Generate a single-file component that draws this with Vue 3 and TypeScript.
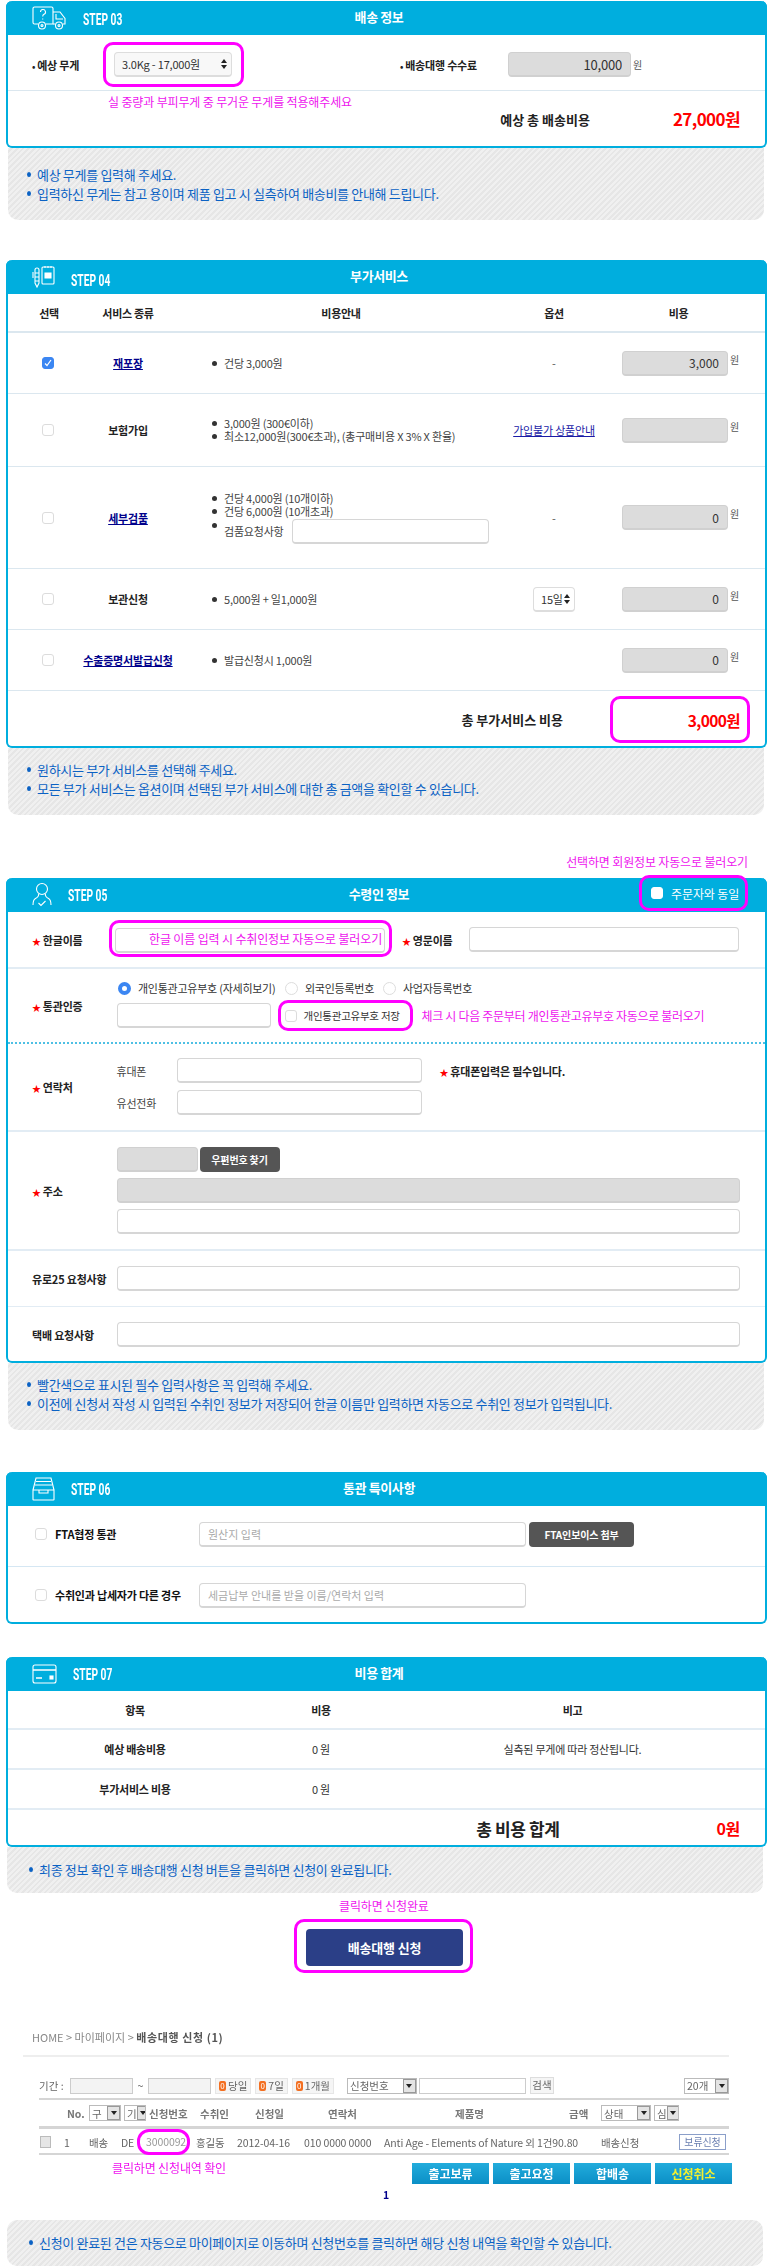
<template>
  <div class="page">
    <!-- STEP 03 -->
    <section class="card step3">
      <header class="head">
        <div class="head-left">
          <svg width="35" height="24" viewBox="0 0 35 24" class="ico">
            <path d="M6 18H2.500a1.500 1.500 0 0 1-1.500-1.500V2.500A1.500 1.500 0 0 1 2.500 1h17A1.500 1.500 0 0 1 21 2.500V18H14" />
            <path d="M21 6h7l5 6.500V18h-2M21 18h2M24 8v5h7" />
            <circle cx="10" cy="19.500" r="3.500" /><circle cx="10" cy="19.500" r="1" />
            <circle cx="27" cy="19.500" r="3.500" /><circle cx="27" cy="19.500" r="1" />
            <path d="M8.500 6a2.500 2.500 0 1 1 3.500 2.300c-1 .5-1.300 1-1.300 2.200M10.700 12.500v1" />
          </svg>
          <span class="step">STEP 03</span>
        </div>
        <h2>배송 정보</h2>
      </header>
      <div class="ship-row">
        <span class="label dot-label weight-label">예상 무게</span>
        <div class="ringed select-ring">
          <div class="select weight-select">3.0Kg - 17,000원<svg width="6" height="10" viewBox="0 0 6 10"><path d="M3 0l3 4H0zM3 10L0 6h6z" /></svg></div>
        </div>
        <span class="label dot-label fee-label">배송대행 수수료</span>
        <input class="field gray amount fee-input" value="10,000" readonly />
        <span class="won">원</span>
      </div>
      <div class="ship-total">
        <p class="hint weight-hint">실 중량과 부피무게 중 무거운 무게를 적용해주세요</p>
        <div class="total-line">
          <strong class="ship-total-label">예상 총 배송비용</strong>
          <strong class="price ship-price">27,000원</strong>
        </div>
      </div>
    </section>
    <div class="note note3">
      <p>예상 무게를 입력해 주세요.</p>
      <p>입력하신 무게는 참고 용이며 제품 입고 시 실측하여 배송비를 안내해 드립니다.</p>
    </div>

    <!-- STEP 04 -->
    <section class="card step4">
      <header class="head">
        <div class="head-left">
          <svg width="23" height="24" viewBox="0 0 23 24" class="ico">
            <path d="M3 5a2 2 0 0 1 4 0v13l-2 4-2-4zM3 8h4M3 12h4M3 16h4M1 7v6" />
            <rect x="10" y="2" width="12" height="17" rx="1" />
            <path d="M13 1v2M16 1v2M19 1v2" /><path d="M13 8h6v5h-6z" fill="#fff" />
          </svg>
          <span class="step">STEP 04</span>
        </div>
        <h2>부가서비스</h2>
      </header>
      <div class="svc-grid svc-head">
        <span>선택</span><span>서비스 종류</span><span>비용안내</span><span>옵션</span><span>비용</span>
      </div>
      <div v-for="svc in services" :key="svc.name" class="svc-grid svc-row" :class="svc.rowClass">
        <span class="check" :class="{ on: svc.checked }">
          <svg v-if="svc.checked" width="8" height="8" viewBox="0 0 8 8"><path d="M1 4.500l2 2 4-5.500" /></svg>
        </span>
        <a v-if="svc.link" class="svc-link">{{ svc.name }}</a>
        <span v-else class="svc-name">{{ svc.name }}</span>
        <ul class="svc-info">
          <li v-for="line in svc.info" :key="line">{{ line }}</li>
          <li v-if="svc.extraInput" class="with-input">검품요청사항<input class="field extra-input" /></li>
        </ul>
        <div class="svc-option">
          <a v-if="svc.option === 'guide'" class="guide-link">가입불가 상품안내</a>
          <div v-else-if="svc.option === 'days'" class="select days-select">15일<svg width="6" height="10" viewBox="0 0 6 10"><path d="M3 0l3 4H0zM3 10L0 6h6z" /></svg></div>
          <span v-else>{{ svc.option }}</span>
        </div>
        <div class="svc-cost">
          <input class="field gray amount svc-input" :value="svc.cost" readonly />
          <span class="won">원</span>
        </div>
      </div>
      <div class="svc-total">
        <strong class="svc-total-label">총 부가서비스 비용</strong>
        <div class="ringed svc-total-ring"><strong class="price svc-price">3,000원</strong></div>
      </div>
    </section>
    <div class="note note4">
      <p>원하시는 부가 서비스를 선택해 주세요.</p>
      <p>모든 부가 서비스는 옵션이며 선택된 부가 서비스에 대한 총 금액을 확인할 수 있습니다.</p>
    </div>

    <!-- STEP 05 -->
    <p class="hint same-hint">선택하면 회원정보 자동으로 불러오기</p>
    <section class="card step5">
      <header class="head">
        <div class="head-left">
          <svg width="20" height="26" viewBox="0 0 20 26" class="ico">
            <circle cx="10" cy="7" r="5.500" />
            <path d="M6.500 12c.5 2-1 3.500-3 4.500S1 19 1 23M13.500 12c-.5 2 1 3.500 3 4.500S19 19 19 23" />
            <path d="M6.500 21l2.500 2.500 4.500-4.500" />
          </svg>
          <span class="step">STEP 05</span>
        </div>
        <h2>수령인 정보</h2>
        <label class="same-buyer">
          <span class="check white"></span>주문자와 동일
        </label>
      </header>

      <div class="form-row name-row">
        <span class="label req name-label short">한글이름</span>
        <div class="ringed name-ring">
          <div class="field name-field"><span class="hint">한글 이름 입력 시 수취인정보 자동으로 불러오기</span></div>
        </div>
        <span class="label req eng-label">영문이름</span>
        <input class="field eng-input" />
      </div>

      <div class="form-row customs-row">
        <span class="label req name-label">통관인증</span>
        <div class="customs-body">
          <div class="radios">
            <span class="radio on"></span><span class="radio-text first">개인통관고유부호 (자세히보기)</span>
            <span class="radio"></span><span class="radio-text second">외국인등록번호</span>
            <span class="radio"></span><span class="radio-text">사업자등록번호</span>
          </div>
          <div class="customs-input">
            <input class="field customs-field" />
            <div class="ringed save-ring">
              <span class="check"></span><span class="radio-text">개인통관고유부호 저장</span>
            </div>
            <span class="hint save-hint">체크 시 다음 주문부터 개인통관고유부호 자동으로 불러오기</span>
          </div>
        </div>
      </div>

      <div class="form-row contact-row">
        <span class="label req name-label">연락처</span>
        <div class="contact-body">
          <div class="contact-line">
            <span class="sub-label">휴대폰</span>
            <input class="field contact-input" />
            <span class="label req phone-note">휴대폰입력은 필수입니다.</span>
          </div>
          <div class="contact-line">
            <span class="sub-label">유선전화</span>
            <input class="field contact-input" />
          </div>
        </div>
      </div>

      <div class="form-row addr-row">
        <span class="label req name-label">주소</span>
        <div class="addr-body">
          <div class="zip-line">
            <input class="field gray zip-input" readonly />
            <button class="dark-btn zip-btn">우편번호 찾기</button>
          </div>
          <input class="field gray wide" readonly />
          <input class="field wide" />
        </div>
      </div>

      <div class="form-row req-row">
        <span class="label name-label">유로25 요청사항</span>
        <input class="field wide" />
      </div>
      <div class="form-row req-row last">
        <span class="label name-label">택배 요청사항</span>
        <input class="field wide" />
      </div>
    </section>
    <div class="note note5">
      <p>빨간색으로 표시된 필수 입력사항은 꼭 입력해 주세요.</p>
      <p>이전에 신청서 작성 시 입력된 수취인 정보가 저장되어 한글 이름만 입력하면 자동으로 수취인 정보가 입력됩니다.</p>
    </div>

    <!-- STEP 06 -->
    <section class="card step6">
      <header class="head">
        <div class="head-left">
          <svg width="23" height="24" viewBox="0 0 23 24" class="ico">
            <path d="M1 13h21v9.500a.5.5 0 0 1-.5.5h-20a.5.5 0 0 1-.5-.5zM1 13l3-12h15l3 12" />
            <path d="M3 8h17M4 4.500h15M7 13v3h9v-3" />
          </svg>
          <span class="step">STEP 06</span>
        </div>
        <h2>통관 특이사항</h2>
      </header>
      <div class="fta-row">
        <span class="check"></span><span class="label fta-label">FTA협정 통관</span>
        <input class="field fta-input" placeholder="원산지 입력" />
        <button class="dark-btn fta-btn">FTA인보이스 첨부</button>
      </div>
      <div class="fta-row last">
        <span class="check"></span><span class="label fta-label">수취인과 납세자가 다른 경우</span>
        <input class="field fta-input" placeholder="세금납부 안내를 받을 이름/연락처 입력" />
      </div>
    </section>

    <!-- STEP 07 -->
    <section class="card step7">
      <header class="head">
        <div class="head-left">
          <svg width="25" height="20" viewBox="0 0 25 20" class="ico">
            <rect x="1" y="1" width="23" height="18" rx="2" />
            <path d="M1 6h23M4 14h6" stroke-width="1.400" />
            <rect x="18" y="12" width="3" height="3" fill="#fff" />
          </svg>
          <span class="step">STEP 07</span>
        </div>
        <h2>비용 합계</h2>
      </header>
      <div class="sum-grid sum-head"><span>항목</span><span>비용</span><span>비고</span></div>
      <div v-for="row in summary" :key="row.name" class="sum-grid sum-row">
        <span class="sum-name">{{ row.name }}</span><span>0 원</span><span>{{ row.memo }}</span>
      </div>
      <div class="sum-total">
        <strong class="sum-total-label">총 비용 합계</strong>
        <strong class="price sum-price">0원</strong>
      </div>
    </section>
    <div class="note note7">
      <p>최종 정보 확인 후 배송대행 신청 버튼을 클릭하면 신청이 완료됩니다.</p>
    </div>

    <p class="hint submit-hint">클릭하면 신청완료</p>
    <div class="submit-wrap">
      <div class="ringed submit-ring"><button class="submit-btn">배송대행 신청</button></div>
    </div>

    <!-- 마이페이지 캡처 -->
    <div class="legacy">
      <p class="crumb">HOME &gt; 마이페이지 &gt; <b>배송대행 신청 (1)</b></p>
      <div class="crumb-line"></div>
      <div class="lg-search">
        <span class="lg-period">기간 :</span>
        <span class="lg-input date"></span>
        <span class="lg-tilde">~</span>
        <span class="lg-input date"></span>
        <span v-for="chip in chips" :key="chip" class="lg-chip"><i>0</i>{{ chip }}</span>
        <span class="lg-select no-select">신청번호<em></em></span>
        <span class="lg-input keyword"></span>
        <span class="lg-search-btn">검색</span>
        <span class="lg-select count-select">20개<em></em></span>
      </div>
      <div class="lg-line"></div>
      <div class="lg-head">
        <b>No.</b>
        <span class="lg-select">구<em></em></span>
        <span class="lg-select">기<em></em></span>
        <b>신청번호</b><b>수취인</b><b>신청일</b><b>연락처</b><b>제품명</b><b>금액</b>
        <span class="lg-select">상태<em></em></span>
        <span class="lg-select">심<em></em></span>
      </div>
      <div class="lg-line thick"></div>
      <div class="lg-row">
        <span class="lg-check"></span>
        <span>1</span><span>배송</span><span>DE</span>
        <span class="ringed order-ring"><span class="order-no">3000092</span></span>
        <span>홍길동</span><span>2012-04-16</span><span>010 0000 0000</span>
        <span>Anti Age - Elements of Nature 외 1건90.80</span>
        <span>배송신청</span>
        <span class="lg-hold">보류신청</span>
      </div>
      <div class="lg-line"></div>
      <div class="lg-actions">
        <p class="hint order-hint">클릭하면 신청내역 확인</p>
        <div class="lg-btns">
          <span v-for="btn in legacyButtons" :key="btn" class="lg-btn">{{ btn }}</span>
          <span class="lg-btn cancel">신청취소</span>
        </div>
      </div>
      <p class="lg-page">1</p>
    </div>
    <div class="note note-last">
      <p>신청이 완료된 건은 자동으로 마이페이지로 이동하며 신청번호를 클릭하면 해당 신청 내역을 확인할 수 있습니다.</p>
    </div>
  </div>
</template>

<script setup lang="ts">
interface Service {
  name: string
  rowClass: string
  link?: boolean
  checked?: boolean
  info: string[]
  extraInput?: boolean
  option: string
  cost: string
}

const services: Service[] = [
  { name: '재포장', rowClass: 'r1', link: true, checked: true, info: ['건당 3,000원'], option: '-', cost: '3,000' },
  {
    name: '보험가입',
    rowClass: 'r2',
    info: ['3,000원 (300€이하)', '최소12,000원(300€초과), (총구매비용 X 3% X 환율)'],
    option: 'guide',
    cost: '',
  },
  {
    name: '세부검품',
    rowClass: 'r3',
    link: true,
    info: ['건당 4,000원 (10개이하)', '건당 6,000원 (10개초과)'],
    extraInput: true,
    option: '-',
    cost: '0',
  },
  { name: '보관신청', rowClass: 'r4', info: ['5,000원 + 일1,000원'], option: 'days', cost: '0' },
  { name: '수출증명서발급신청', rowClass: 'r5', link: true, info: ['발급신청시 1,000원'], option: '', cost: '0' },
]

const summary = [
  { name: '예상 배송비용', memo: '실측된 무게에 따라 정산됩니다.' },
  { name: '부가서비스 비용', memo: '' },
]

const chips = ['당일', '7일', '1개월']
const legacyButtons = ['출고보류', '출고요청', '합배송']
</script>

<style>
html,
body {
  margin: 0;
  background: #fff;
}
</style>

<style scoped>
* {
  box-sizing: border-box;
}

.page {
  width: 774px;
  height: 2266px;
  overflow: hidden;
  padding-top: 1px;
  font-family: "Noto Sans CJK KR", "Noto Sans", sans-serif;
  font-size: 11px;
  color: #333;
}

p,
h2,
ul {
  margin: 0;
  padding: 0;
}

/* shared card */
.card {
  position: relative;
  width: 761px;
  margin-left: 6px;
  border: 2px solid #00aede;
  border-top: 0;
  border-radius: 6px;
  background: #fff;
}

.head {
  display: grid;
  grid-template-columns: 1fr auto 1fr;
  align-items: center;
  height: 34px;
  margin: 0 -2px;
  padding: 0 41px 0 26px;
  background: #00aede;
  border-radius: 6px 6px 0 0;
  color: #fff;
}

.head h2 {
  font-size: 13px;
  font-weight: 700;
  letter-spacing: -0.4px;
  line-height: 18px;
  margin-top: -3px;
}

.head-left {
  display: flex;
  align-items: center;
  gap: 16px;
}

.ico {
  flex: none;
  fill: none;
  stroke: #fff;
  stroke-width: 1.1;
}

.step {
  display: inline-block;
  width: 40px;
  margin-top: 1px;
  font-family: Roboto, sans-serif;
  font-size: 16px;
  font-weight: 700;
  white-space: nowrap;
  transform: scaleX(0.64);
  transform-origin: left center;
}

.step3 .step {
  margin-top: 3px;
}

.step4 .step {
  margin-top: 6px;
}

.label {
  font-weight: 700;
  color: #222;
  letter-spacing: -0.2px;
  white-space: nowrap;
}

.dot-label::before {
  content: "•";
  margin-right: 2px;
  font-size: 9px;
}

.req::before {
  content: "★";
  margin-right: 2px;
  color: #f00;
  font-size: 9px;
}

.hint {
  color: #ee14ee;
  font-size: 12px;
  letter-spacing: -0.15px;
  line-height: 16px;
  white-space: nowrap;
}

.ringed {
  position: relative;
}

.ringed::after {
  content: "";
  position: absolute;
  inset: 0;
  border: 3px solid #f0f;
  border-radius: 10px;
  pointer-events: none;
}

.field {
  display: block;
  height: 25px;
  border: 1px solid #d6d6d6;
  border-bottom-width: 2px;
  border-radius: 4px;
  background: #fff;
  outline: 0;
  padding: 0 8px;
  font: 11px "Noto Sans CJK KR", sans-serif;
  color: #333;
}

.field::placeholder {
  color: #aaa;
}

.gray {
  background: #dcdcdc;
  border-color: #d0d0d0;
}

.amount {
  text-align: right;
  font-size: 12px;
}

.won {
  margin-left: 2px;
  font-size: 10px;
  color: #555;
}

.select {
  display: flex;
  align-items: center;
  justify-content: space-between;
  height: 25px;
  padding: 0 4px 0 7px;
  border: 1px solid #ddd;
  border-bottom-width: 2px;
  border-radius: 4px;
  background: #f8f8f8;
  color: #333;
  letter-spacing: -0.2px;
}

.select svg {
  fill: #222;
}

.price {
  color: #f00;
  white-space: nowrap;
}

.check {
  flex: none;
  display: flex;
  align-items: center;
  justify-content: center;
  width: 12px;
  height: 12px;
  border: 1px solid #dcdcdc;
  border-radius: 3px;
  background: #fff;
}

.check.on {
  background: #3b86f2;
  border-color: #3b86f2;
}

.check svg {
  fill: none;
  stroke: #fff;
  stroke-width: 1.200;
}

.dark-btn {
  height: 25px;
  border: 0;
  border-radius: 4px;
  background: #555;
  color: #fff;
  font: 700 10px "Noto Sans CJK KR", sans-serif;
  letter-spacing: -0.15px;
}

/* notes */
.note {
  display: flex;
  flex-direction: column;
  justify-content: center;
  width: 756px;
  margin-left: 8px;
  padding-left: 29px;
  border-radius: 0 0 10px 10px;
  background: repeating-linear-gradient(135deg, #f0f0f0 0 2px, #e6e6e6 2px 4px);
  color: #0b62c4;
  font-size: 13px;
  letter-spacing: -0.32px;
  line-height: 19px;
}

.note p {
  position: relative;
  white-space: nowrap;
}

.note p::before {
  content: "";
  position: absolute;
  left: -10px;
  top: 7px;
  width: 4px;
  height: 5px;
  border-radius: 50%;
  background: #0b62c4;
}

.note3 {
  height: 72px;
}

.note4,
.note5 {
  height: 67px;
  padding-bottom: 6px;
}

.note7 {
  height: 46px;
  margin-left: 7px;
  padding-left: 32px;
  padding-bottom: 2px;
}

.note-last {
  height: 46px;
  margin-left: 7px;
  padding-left: 32px;
  padding-bottom: 2px;
  border-radius: 10px;
}

/* step 03 */
.step3 {
  height: 147px;
}

.ship-row {
  display: flex;
  align-items: center;
  height: 56px;
  padding: 4px 0 0 24px;
  border-bottom: 1px solid #dbe7ef;
}

.weight-label {
  width: 71px;
}

.select-ring {
  width: 141px;
  padding: 10px 11px;
}

.weight-select {
  width: 118px;
}

.fee-label {
  margin-left: 156px;
  width: 108px;
}

.fee-input {
  width: 123px;
  font-size: 13px;
  letter-spacing: -0.2px;
}

.ship-total {
  padding: 3px 0 0 100px;
}

.total-line {
  display: flex;
  align-items: center;
  justify-content: flex-end;
  margin-top: -4px;
  padding-right: 25px;
}

.ship-total-label {
  font-size: 13px;
  color: #222;
}

.ship-price {
  margin-left: 83px;
  font-size: 17px;
  letter-spacing: -0.6px;
  line-height: 26px;
}

/* step 04 */
.step4 {
  height: 488px;
  margin-top: 40px;
}

.svc-grid {
  display: grid;
  grid-template-columns: 82px 76px 350px 76px 173px;
  justify-items: center;
  align-items: center;
  border-bottom: 1px solid #dbe7ef;
  white-space: nowrap;
}

.svc-head {
  height: 39px;
  border-bottom-width: 2px;
  font-weight: 700;
  letter-spacing: -0.3px;
  color: #222;
}

.svc-row .check {
  margin-right: 2px;
}

.svc-row.r1 {
  height: 61px;
}

.svc-row.r2 {
  height: 73px;
}

.svc-row.r3 {
  height: 102px;
}

.svc-row.r4,
.svc-row.r5 {
  height: 61px;
}

.svc-link {
  font-weight: 700;
  color: #00008b;
  text-decoration: underline;
  letter-spacing: -0.2px;
}

.svc-name {
  font-weight: 700;
  color: #222;
  letter-spacing: -0.2px;
}

.svc-info {
  justify-self: start;
  padding-left: 58px;
  list-style: none;
  color: #444;
  line-height: 13px;
  letter-spacing: -0.2px;
}

.svc-info li {
  position: relative;
}

.svc-info li::before {
  content: "";
  position: absolute;
  left: -12px;
  top: 4px;
  width: 5px;
  height: 5px;
  border-radius: 50%;
  background: #333;
}

.with-input {
  display: flex;
  align-items: center;
  margin-top: 1px;
}

.extra-input {
  width: 197px;
  margin-left: 8px;
}

.svc-option {
  color: #555;
}

.guide-link {
  color: #1a1aa6;
  text-decoration: underline;
  letter-spacing: -0.2px;
}

.days-select {
  width: 42px;
  background: #fff;
}

.svc-cost {
  display: flex;
  align-items: flex-start;
  width: 118px;
  margin-left: 5px;
}

.svc-input {
  flex: none;
  width: 106px;
}

.svc-cost .won {
  margin-top: 1px;
}

.svc-total {
  display: flex;
  align-items: center;
  justify-content: flex-end;
  height: 57px;
  padding-right: 15px;
}

.svc-total-label {
  font-size: 13px;
  color: #222;
  margin-right: 47px;
}

.svc-total-ring {
  display: flex;
  align-items: center;
  justify-content: flex-end;
  width: 140px;
  height: 47px;
  padding-right: 10px;
}

.svc-price {
  font-size: 15.500px;
  letter-spacing: -0.6px;
}

/* step 05 */
.same-hint {
  margin: 39px 26px 0 0;
  text-align: right;
}

.step5 {
  height: 485px;
  margin-top: 8px;
}

.same-buyer {
  position: absolute;
  top: -3px;
  left: 631px;
  display: flex;
  align-items: center;
  gap: 8px;
  width: 109px;
  height: 36px;
  padding-left: 9px;
  border: 3px solid #f0f;
  border-radius: 10px;
  font-size: 12px;
  letter-spacing: -0.1px;
  white-space: nowrap;
}

.check.white {
  border-color: #fff;
}

.form-row {
  display: flex;
  align-items: center;
  padding-left: 24px;
  border-bottom: 2px solid #e2ecf4;
}

.name-label {
  flex: none;
  width: 84.500px;
}

.name-label.short {
  width: 77px;
}

.name-row {
  height: 57px;
}

.name-ring {
  width: 283px;
  height: 37px;
  padding: 8px 6px 4px 6px;
  margin-top: -2px;
}

.name-field {
  position: relative;
  width: 270px;
  padding-left: 33px;
  line-height: 21px;
}

.eng-label {
  width: 67px;
  margin-left: 10px;
}

.eng-input {
  width: 270px;
}

.customs-row {
  height: 75px;
  border-bottom: 2px dotted #4ec0e4;
}

.radios {
  display: flex;
  align-items: center;
  padding-left: 1.500px;
}

.radio {
  flex: none;
  width: 13px;
  height: 13px;
  border: 1px solid #ddd;
  border-radius: 50%;
  background: #fff;
}

.radio.on {
  border: 4px solid #3b86f2;
}

.radio-text {
  margin-left: 7px;
  color: #333;
  letter-spacing: -0.25px;
  white-space: nowrap;
}

.radio-text.first {
  width: 147px;
}

.radio-text.second {
  width: 78px;
}

.customs-input {
  display: flex;
  align-items: center;
  margin-top: 4px;
}

.customs-field {
  width: 154px;
}

.save-ring {
  display: flex;
  align-items: center;
  width: 135px;
  height: 31px;
  margin-left: 7px;
  padding-left: 7px;
}

.save-ring .radio-text {
  font-size: 10.500px;
}

.save-hint {
  margin-left: 9px;
  letter-spacing: -0.3px;
}

.contact-row {
  height: 88px;
}

.contact-body {
  display: flex;
  flex-direction: column;
  gap: 7px;
  margin-top: -1px;
}

.contact-line {
  display: flex;
  align-items: center;
}

.sub-label {
  width: 60px;
  color: #444;
  letter-spacing: -0.2px;
}

.contact-input {
  width: 245px;
}

.phone-note {
  margin-left: 18px;
}

.addr-row {
  height: 119px;
}

.addr-body {
  display: flex;
  flex-direction: column;
  gap: 6px;
}

.zip-line {
  display: flex;
  gap: 2px;
}

.zip-input {
  width: 81px;
}

.zip-btn {
  width: 80px;
}

.wide {
  width: 623px;
}

.req-row {
  height: 56px;
  border-bottom-width: 1px;
}

.req-row.last {
  height: 55px;
  border-bottom: 0;
}

/* step 06 */
.step6 {
  height: 152px;
  margin-top: 42px;
}

.fta-row {
  display: flex;
  align-items: flex-start;
  height: 61px;
  padding: 16px 0 0 27px;
  border-bottom: 1px solid #d5e7f3;
}

.fta-row.last {
  height: 57px;
  border-bottom: 0;
}

.fta-row .check {
  margin-top: 6px;
}

.fta-label {
  width: 144px;
  margin-left: 8px;
  line-height: 24px;
  color: #111;
}

.fta-input {
  width: 327px;
}

.fta-btn {
  width: 105px;
  margin-left: 3px;
}

/* step 07 */
.step7 {
  height: 190px;
  margin-top: 33px;
}

.sum-grid {
  display: grid;
  grid-template-columns: 254px 118px 385px;
  justify-items: center;
  align-items: center;
  height: 39px;
  border-bottom: 2px solid #e2ecf4;
  letter-spacing: -0.25px;
}

.sum-head {
  font-weight: 700;
  color: #222;
}

.sum-row {
  height: 40px;
}

.sum-name {
  font-weight: 700;
  color: #222;
}

.sum-total {
  display: flex;
  align-items: center;
  justify-content: flex-end;
  height: 36px;
  padding-right: 25px;
}

.sum-total-label {
  margin-right: 157px;
  font-size: 17px;
  color: #222;
  letter-spacing: -0.4px;
}

.sum-price {
  font-size: 16px;
  letter-spacing: -0.3px;
}

/* submit */
.submit-hint {
  margin-top: 5px;
  padding-left: 339px;
}

.submit-wrap {
  display: flex;
  margin-top: 5px;
  padding-left: 294px;
}

.submit-ring {
  width: 179px;
  height: 54px;
  padding: 10px 12px;
}

.submit-btn {
  width: 157px;
  height: 37px;
  border: 0;
  border-radius: 4px;
  background: #2b3f87;
  color: #fff;
  font: 700 13px "Noto Sans CJK KR", sans-serif;
  letter-spacing: -0.2px;
}

/* legacy capture */
.legacy {
  height: 247px;
  padding-top: 56px;
  font-size: 10.500px;
  color: #666;
  filter: blur(0.4px);
  white-space: nowrap;
}

.crumb {
  padding-left: 32px;
  line-height: 16px;
  font-size: 11px;
  color: #888;
}

.crumb b {
  color: #555;
  letter-spacing: 0.6px;
}

.crumb-line {
  width: 706px;
  height: 2px;
  margin: 10px 0 0 23px;
  background: #eee;
}

.lg-search {
  display: flex;
  align-items: center;
  height: 17px;
  margin: 20px 0 0 39px;
  width: 690px;
}

.lg-period {
  width: 31px;
}

.lg-input {
  height: 16px;
  border: 1px solid #ccc;
  background: #f3f3f3;
}

.lg-input.date {
  width: 63px;
}

.lg-tilde {
  width: 15px;
  text-align: center;
}

.lg-chip {
  display: flex;
  align-items: center;
  gap: 2px;
  height: 16px;
  margin-left: 4px;
  padding: 0 3px;
  background: #f5f5f5;
  border: 1px solid #e6e6e6;
}

.lg-chip i {
  width: 7px;
  height: 10px;
  border-radius: 2px;
  background: #f36f21;
  color: #fff;
  font-size: 8px;
  font-style: normal;
  line-height: 10px;
  text-align: center;
}

.lg-select {
  display: flex;
  align-items: center;
  justify-content: space-between;
  height: 16px;
  border: 1px solid #bbb;
  background: #fff;
  padding-left: 2px;
  overflow: hidden;
}

.lg-select em {
  flex: none;
  position: relative;
  width: 13px;
  height: 14px;
  background: #e4e4e4;
  border: 1px solid #999;
}

.lg-select em::after {
  content: "";
  position: absolute;
  left: 2.500px;
  top: 4px;
  border: 3px solid transparent;
  border-top: 4px solid #222;
}

.no-select {
  width: 70px;
  margin-left: 13px;
}

.keyword {
  width: 107px;
  margin-left: 2px;
  background: #fff;
}

.lg-search-btn {
  width: 24px;
  height: 17px;
  margin-left: 4px;
  background: #f5f5f5;
  border: 1px solid #ddd;
  text-align: center;
  line-height: 14px;
}

.count-select {
  width: 45px;
  margin-left: auto;
}

.lg-line {
  width: 690px;
  height: 2px;
  margin: 0 0 0 39px;
  background: #d5d5d5;
}

.lg-search + .lg-line {
  margin-top: 4px;
}

.lg-line.thick {
  height: 3px;
}

.lg-head {
  display: grid;
  grid-template-columns: 22px 35px 25px 51px 55px 73px 127px 114px 32px 53px 25px;
  align-items: center;
  height: 26px;
  padding-left: 67px;
}

.lg-head b {
  font-weight: 700;
  color: #777;
}

.lg-head .lg-select {
  width: 32px;
}

.lg-head > .lg-select:nth-child(3) {
  width: 22px;
}

.lg-head > .lg-select:nth-last-child(2) {
  width: 50px;
}

.lg-head > .lg-select:last-child {
  width: 25px;
}

.lg-row {
  display: grid;
  grid-template-columns: 24px 25px 32px 25px 50px 41px 67px 80px 217px 78px 47px;
  align-items: center;
  height: 24px;
  padding-left: 40px;
  letter-spacing: -0.1px;
}

.lg-check {
  width: 11px;
  height: 12px;
  border: 1px solid #bbb;
  background: #e6e6e6;
}

.order-ring {
  display: block;
  width: 53px;
  height: 26px;
  margin-left: -9px;
  padding: 5px 0 0 9px;
  line-height: 16px;
}

.order-ring::after {
  border-radius: 12px;
}

.order-no {
  color: #999;
}

.lg-hold {
  width: 47px;
  height: 16px;
  border: 1px solid #8b9fc9;
  color: #6a7fb0;
  font-size: 10px;
  line-height: 14px;
  text-align: center;
}

.lg-actions {
  display: flex;
  justify-content: space-between;
  width: 732px;
  margin-top: 8px;
  padding-left: 112px;
}

.order-hint {
  margin-top: -3px;
}

.lg-btns {
  display: flex;
  gap: 4px;
}

.lg-btn {
  width: 77px;
  height: 21px;
  background: linear-gradient(#22acdc, #0b8fc6);
  color: #fff;
  font-size: 12px;
  font-weight: 700;
  line-height: 21px;
  text-align: center;
}

.lg-btn.cancel {
  color: #f4f02e;
}

.lg-page {
  margin-top: 4px;
  padding-left: 383px;
  color: #00008b;
  font-weight: 700;
  line-height: 14px;
}
</style>
